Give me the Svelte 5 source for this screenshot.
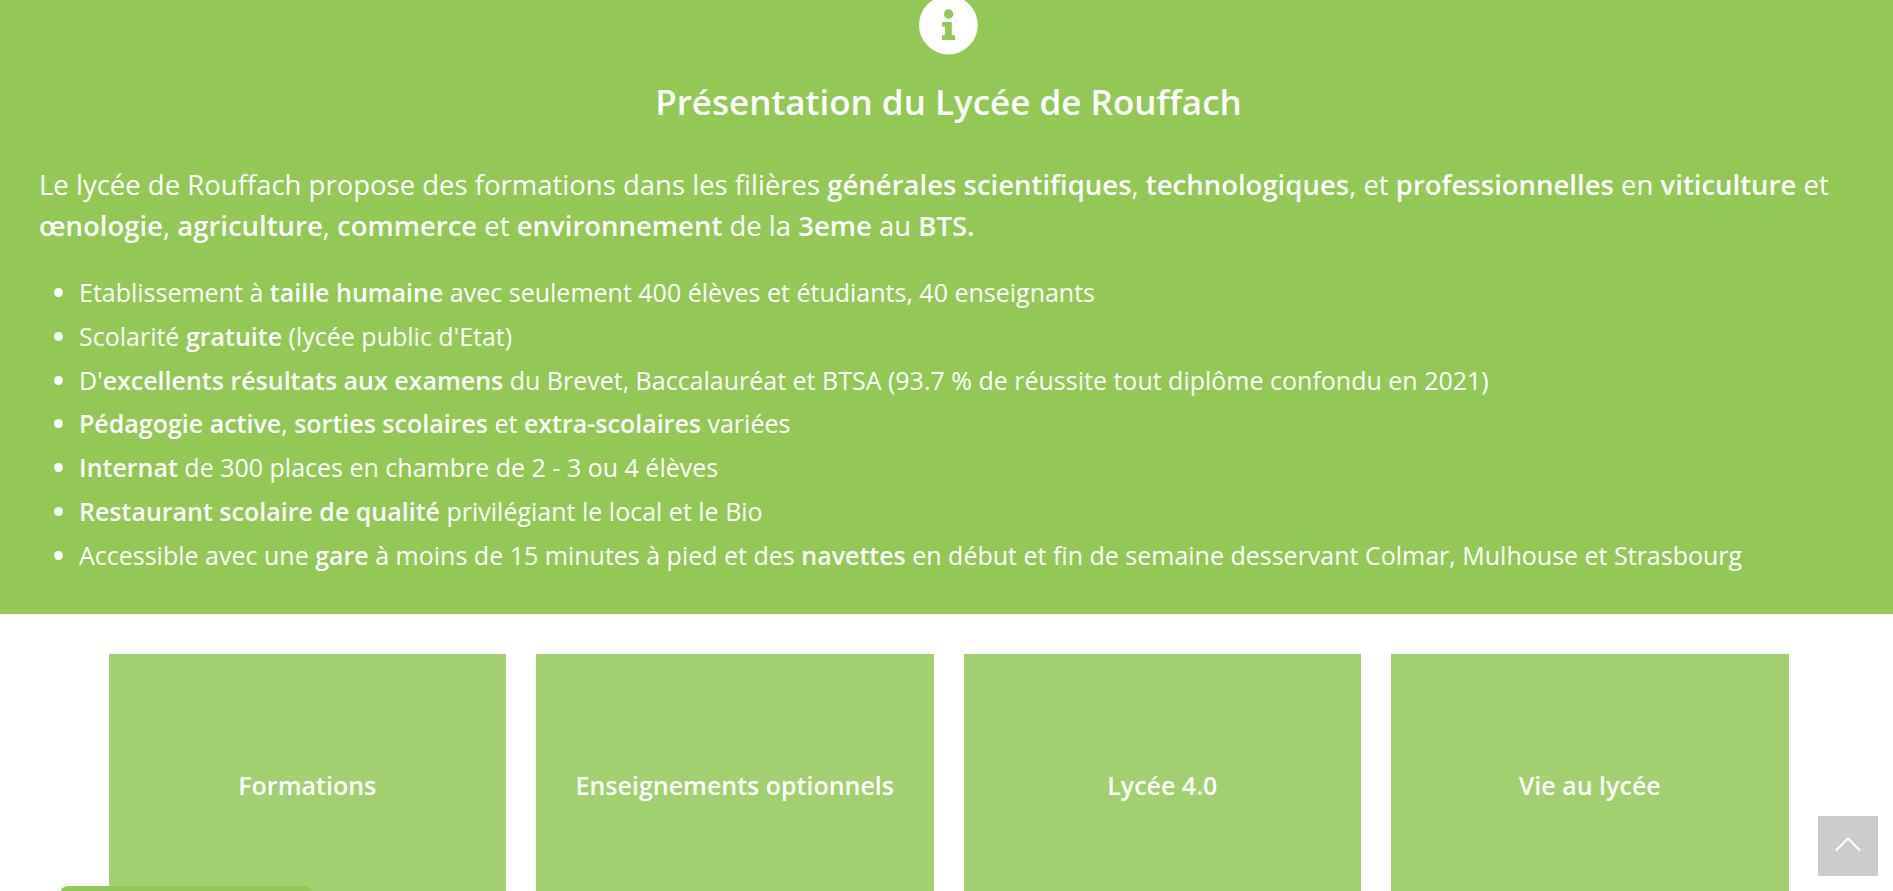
<script>
  const items = [
    [['Etablissement à '], ['taille humaine', 1], [' avec seulement 400 élèves et étudiants, 40 enseignants']],
    [['Scolarité '], ['gratuite', 1], [" (lycée public d'Etat)"]],
    [["D'"], ['excellents résultats aux examens', 1], [' du Brevet, Baccalauréat et BTSA (93.7 % de réussite tout diplôme confondu en 2021)']],
    [['Pédagogie active', 1], [', '], ['sorties scolaires', 1], [' et '], ['extra-scolaires', 1], [' variées']],
    [['Internat', 1], [' de 300 places en chambre de 2 - 3 ou 4 élèves']],
    [['Restaurant scolaire de qualité', 1], [' privilégiant le local et le Bio']],
    [['Accessible avec une '], ['gare', 1], [' à moins de 15 minutes à pied et des '], ['navettes', 1], [' en début et fin de semaine desservant Colmar, Mulhouse et Strasbourg']]
  ];
  const cards = ['Formations', 'Enseignements optionnels', 'Lycée 4.0', 'Vie au lycée'];
</script>

<main>
  <section class="intro">
    <svg class="info" viewBox="0 0 60 60" aria-hidden="true">
      <circle cx="29.4" cy="30" r="29.4" fill="#fff" />
      <circle cx="29.6" cy="19" r="4.7" />
      <path d="M23.2 27H32.8V40.3H36V45H23V40.3H26V31.8H23.2Z" />
    </svg>
    <h2>Présentation du Lycée de Rouffach</h2>
    <p>
      Le lycée de Rouffach propose des formations dans les filières <strong>générales scientifiques</strong>,
      <strong>technologiques</strong>, et <strong>professionnelles</strong> en <strong>viticulture</strong> et
      <strong>œnologie</strong>, <strong>agriculture</strong>, <strong>commerce</strong> et
      <strong>environnement</strong> de la <strong>3eme</strong> au <strong>BTS.</strong>
    </p>
    <ul>
      {#each items as parts}
        <li>{#each parts as [text, bold]}{#if bold}<strong>{text}</strong>{:else}{text}{/if}{/each}</li>
      {/each}
    </ul>
  </section>
  <nav class="cards">
    {#each cards as card}
      <a href="#top">{card}</a>
    {/each}
  </nav>
</main>

<div class="tab"></div>
<button class="up" aria-label="Haut de page">
  <svg viewBox="0 0 26 15" width="26" height="15"><path d="M1 13.5 13 1.5 25 13.5" /></svg>
</button>

<style>
  :global(body) {
    margin: 0;
    background: #fff;
    font-family: 'Open Sans', 'Noto Sans', sans-serif;
  }
  main {
    height: 100vh;
    overflow: hidden;
    color: #fff;
    font-size: 25px;
  }
  .intro {
    box-sizing: border-box;
    padding: 0 35px 37px 39px;
    background: #93c756;
  }
  .info {
    display: block;
    width: 60px;
    height: 60px;
    margin: 0 auto;
    margin-top: -5px;
    fill: #93c756;
  }
  .intro::before {
    content: '';
    display: table;
  }
  h2 {
    margin: 23px 0 0;
    font-size: 35px;
    line-height: 48px;
    font-weight: 600;
    text-align: center;
  }
  strong {
    font-weight: 600;
  }
  p {
    margin: 38px 0 25px;
    font-size: 1.1em;
    line-height: 41px;
  }
  ul {
    margin: 0;
    padding-left: 40px;
    line-height: 1.75;
  }
  .cards {
    display: grid;
    grid-template-columns: repeat(4, 1fr);
    gap: 30px;
    max-width: 1680px;
    margin: 0 auto;
    padding: 40px 0 40px 4px;
  }
  .cards a {
    display: flex;
    align-items: center;
    justify-content: center;
    height: 262px;
    background: #a2d070;
    color: #fff;
    font-weight: 600;
    text-decoration: none;
  }
  .tab {
    position: fixed;
    left: 60px;
    bottom: -11px;
    width: 252px;
    height: 16px;
    border-radius: 8px 8px 0 0;
    background: #93c756;
  }
  .up {
    position: fixed;
    right: 15px;
    bottom: 15px;
    display: grid;
    place-items: center;
    width: 60px;
    height: 60px;
    padding: 0 0 3px;
    border: 0;
    background: #ccc;
  }
  .up path {
    fill: none;
    stroke: #fff;
    stroke-width: 2;
  }
</style>
